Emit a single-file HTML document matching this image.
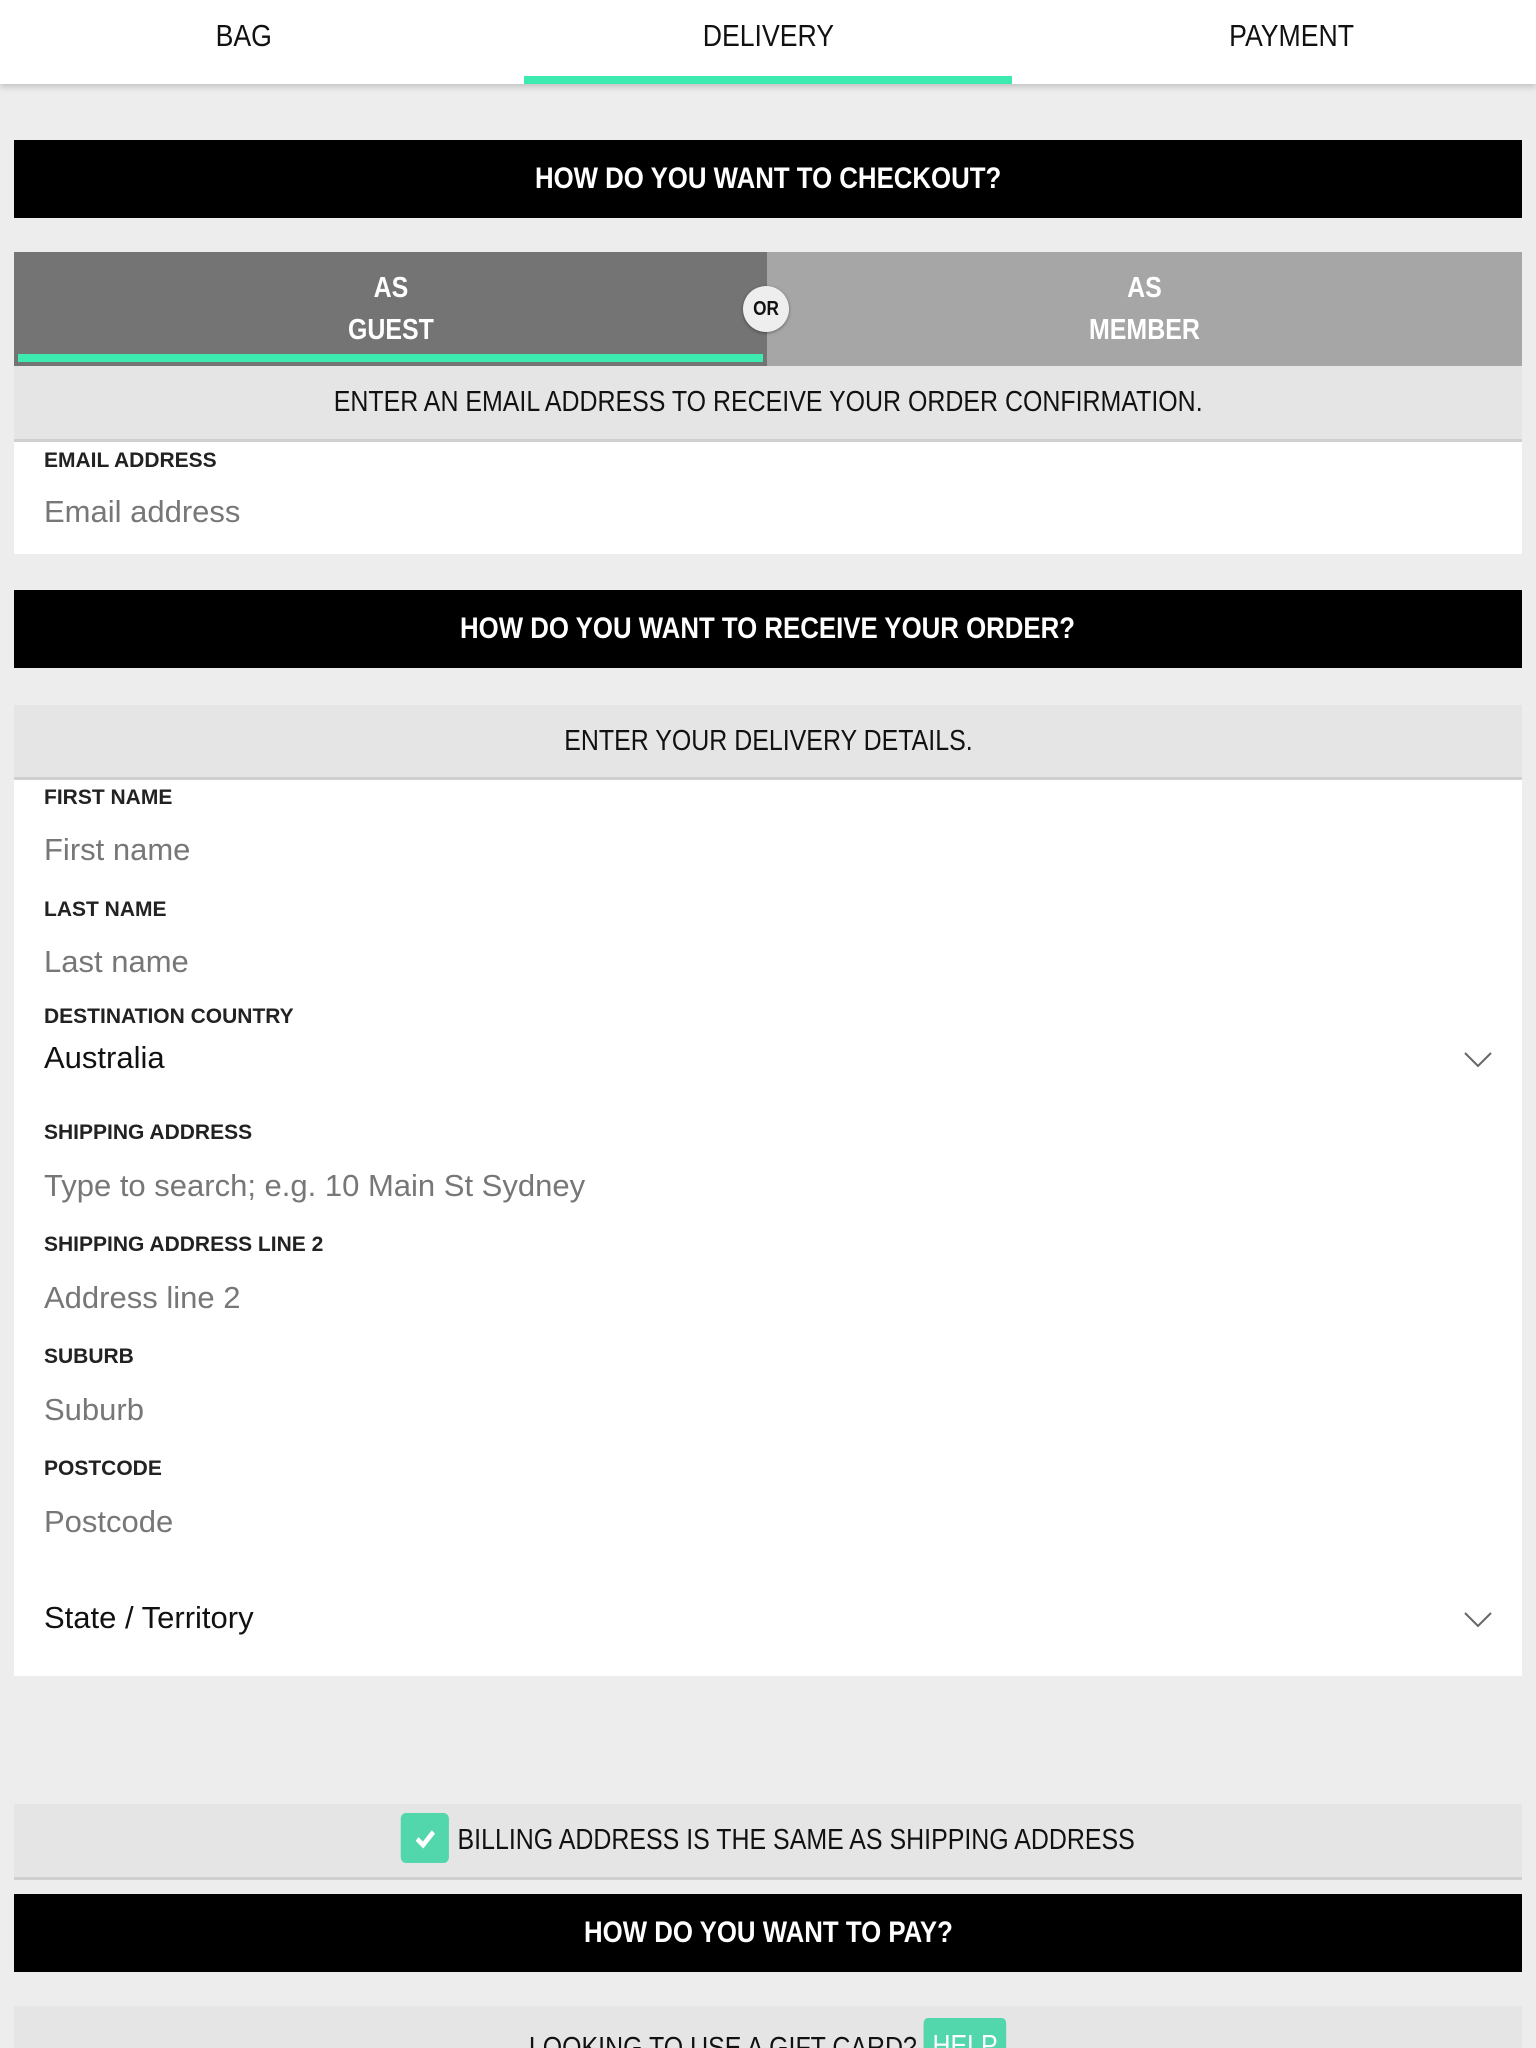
<!DOCTYPE html>
<html><head><meta charset="utf-8"><style>
*{margin:0;padding:0;box-sizing:border-box}
html{overflow:hidden;height:2048px}
body{width:1536px;height:2048px;background:#ededed;font-family:"Liberation Sans",sans-serif;position:relative;overflow:hidden;color:#111}
.a{position:absolute}
.n{display:inline-block;transform:scaleX(0.86);transform-origin:center}
.nav{left:0;top:0;width:1536px;height:84px;background:#fff;box-shadow:0 3px 6px rgba(0,0,0,.18)}
.nav span{position:absolute;top:18px;font-size:31px;color:#111;width:300px;text-align:center}
.bar{left:14px;width:1508px;background:#000;color:#fff;font-weight:bold;font-size:30px;text-align:center}
.band{left:14px;width:1508px;background:#e5e5e5;text-align:center;font-size:29px;border-bottom:3px solid #d0d0d0}
.white{left:14px;width:1508px;background:#fff}
.lbl{position:absolute;left:30px;font-weight:bold;font-size:21px;color:#222}
.inp{position:absolute;left:30px;font-size:31px;color:#777}
.dark{color:#111}
.chev{position:absolute;right:30px;width:28px;height:16px}
</style></head><body>
<div class="a nav">
<span style="left:94px"><i class="n" style="font-style:normal">BAG</i></span>
<span style="left:618px"><i class="n" style="font-style:normal">DELIVERY</i></span>
<span style="left:1142px"><i class="n" style="font-style:normal">PAYMENT</i></span>
<div class="a" style="left:524px;top:76px;width:488px;height:8px;background:#3deab0"></div>
</div>

<div class="a bar" style="top:140px;height:78px;line-height:78px"><span class="n">HOW DO YOU WANT TO CHECKOUT?</span></div>

<div class="a" style="left:14px;top:252px;width:753px;height:114px;background:#747474;color:#fff;font-weight:bold;font-size:29px;text-align:center;line-height:42px;padding-top:15px"><span class="n">AS<br>GUEST</span>
<div class="a" style="left:4px;top:102px;width:745px;height:8px;background:#3deab0"></div></div>
<div class="a" style="left:767px;top:252px;width:755px;height:114px;background:#a6a6a6;color:#fff;font-weight:bold;font-size:29px;text-align:center;line-height:42px;padding-top:15px"><span class="n">AS<br>MEMBER</span></div>
<div class="a" style="left:743px;top:286px;width:46px;height:46px;border-radius:50%;background:#eee;box-shadow:0 1px 3px rgba(0,0,0,.4);text-align:center;line-height:46px;font-weight:bold;font-size:20px"><span class="n">OR</span></div>

<div class="a band" style="top:366px;height:76px;line-height:72px"><span class="n">ENTER AN EMAIL ADDRESS TO RECEIVE YOUR ORDER CONFIRMATION.</span></div>
<div class="a white" style="top:442px;height:112px">
<div class="lbl" style="top:7px">EMAIL ADDRESS</div>
<div class="inp" style="top:52px">Email address</div>
</div>

<div class="a bar" style="top:590px;height:78px;line-height:78px"><span class="n">HOW DO YOU WANT TO RECEIVE YOUR ORDER?</span></div>

<div class="a band" style="top:705px;height:75px;line-height:72px"><span class="n">ENTER YOUR DELIVERY DETAILS.</span></div>
<div class="a white" style="top:780px;height:896px">
<div class="lbl" style="top:6px">FIRST NAME</div>
<div class="inp" style="top:52px">First name</div>
<div class="lbl" style="top:118px">LAST NAME</div>
<div class="inp" style="top:164px">Last name</div>
<div class="lbl" style="top:225px">DESTINATION COUNTRY</div>
<div class="inp dark" style="top:260px">Australia</div>
<svg class="chev" style="top:272px" viewBox="0 0 28 16"><path d="M1 1L14 14L27 1" fill="none" stroke="#666" stroke-width="2"/></svg>
<div class="lbl" style="top:341px">SHIPPING ADDRESS</div>
<div class="inp" style="top:388px">Type to search; e.g. 10 Main St Sydney</div>
<div class="lbl" style="top:453px">SHIPPING ADDRESS LINE 2</div>
<div class="inp" style="top:500px">Address line 2</div>
<div class="lbl" style="top:565px">SUBURB</div>
<div class="inp" style="top:612px">Suburb</div>
<div class="lbl" style="top:677px">POSTCODE</div>
<div class="inp" style="top:724px">Postcode</div>
<div class="inp dark" style="top:820px">State / Territory</div>
<svg class="chev" style="top:832px" viewBox="0 0 28 16"><path d="M1 1L14 14L27 1" fill="none" stroke="#666" stroke-width="2"/></svg>
</div>

<div class="a band" style="top:1804px;height:76px;line-height:72px">
<span class="n"><span style="display:inline-block;vertical-align:middle;width:56px;height:50px;background:#52d6ab;border-radius:6px;margin-right:10px;position:relative;top:-3px"><svg width="56" height="50" viewBox="0 0 56 50"><path d="M19 26L26 32L38 19" fill="none" stroke="#fff" stroke-width="5"/></svg></span>BILLING ADDRESS IS THE SAME AS SHIPPING ADDRESS</span></div>

<div class="a bar" style="top:1894px;height:78px;line-height:78px"><span class="n">HOW DO YOU WANT TO PAY?</span></div>

<div class="a band" style="top:2006px;height:42px;border:none;overflow:hidden">
<span class="n" style="line-height:60px;margin-top:12px">LOOKING TO USE A GIFT CARD? <span style="display:inline-block;background:#52d6ab;color:#fff;padding:0 10px;border-radius:5px;line-height:56px;vertical-align:top">HELP</span></span></div>
</body></html>
